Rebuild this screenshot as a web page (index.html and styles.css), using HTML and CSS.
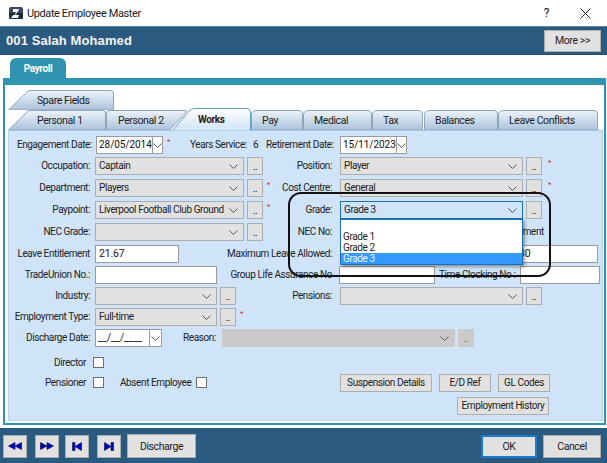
FILE: index.html
```html
<!DOCTYPE html>
<html lang="en">
<head>
<meta charset="utf-8">
<title>Update Employee Master</title>
<link rel="stylesheet" href="styles.css">
</head>
<body>
<svg class="defs" width="0" height="0" aria-hidden="true">
  <symbol id="chev" viewBox="0 0 9 5"><path d="M.5.5 4.5 4.5 8.5.5" fill="none" stroke="#555" stroke-width="1"/></symbol>
</svg>
<div class="window">
  <div class="title">
    <svg class="appicon" width="16" height="16" viewBox="0 0 16 16"><rect x="1" y="2" width="14" height="12" rx="2" fill="#3a4a5c"/><rect x="1" y="8" width="14" height="6" rx="1" fill="#1f2b38"/><path d="M5 4h6l-1 3H9l-1 3h3l-1 3H3l2-3h2l1-3H5z" fill="#f2f2f2"/></svg>
    <span class="title-text">Update Employee Master</span>
    <span class="help">?</span>
    <svg class="close" width="11" height="11" viewBox="0 0 11 11"><path d="M.5.5l10 10M10.500.5l-10 10" stroke="#222" stroke-width="1" fill="none"/></svg>
  </div>
  <div class="header">
    <span class="emp">001 Salah Mohamed</span>
    <div class="btn more">More &gt;&gt;</div>
  </div>
  <div class="outer-tabs"><div class="payroll">Payroll</div></div>
  <div class="page">
    <div class="tabs">
      <div class="tabrow">
        <div class="tab t-spare">
          <svg class="tabshape" width="106" height="20" viewBox="0 0 106 20"><path d="M.5 20 20 1Q21 .5 23 .5H103Q105.500 .5 105.500 3V20Z" fill="url(#g)" stroke="#8fa5b9"/><defs><linearGradient id="g" x1="0" y1="0" x2="0" y2="1"><stop offset="0" stop-color="#eef3f9"/><stop offset="1" stop-color="#a9c3dc"/></linearGradient><linearGradient id="w" x1="0" y1="0" x2="0" y2="1"><stop offset="0" stop-color="#fff"/><stop offset="1" stop-color="#cfe4f8"/></linearGradient></defs></svg>
          <span>Spare Fields</span>
        </div>
      </div>
      <div class="tabrow">
        <div class="tab t-p1">
          <svg class="tabshape" width="98" height="20" viewBox="0 0 98 20"><path d="M.5 20 20 1Q21 .5 23 .5H95Q97.500 .5 97.500 3V20Z" fill="url(#g)" stroke="#8fa5b9"/></svg>
          <span>Personal 1</span>
        </div>
        <div class="tab t-p2">
          <svg class="tabshape" width="82" height="20" viewBox="0 0 82 20"><path d="M.5 20V4Q.5 .5 4 .5H79Q81 .5 80 2L64 20Z" fill="url(#g)" stroke="#8fa5b9"/></svg>
          <span>Personal 2</span>
        </div>
        <div class="tab t-works">
          <svg class="tabshape" width="79" height="23" viewBox="0 0 79 23"><path d="M.5 22.500 17 3Q19 .5 23 .5H74Q78.500 .5 78.500 5V22.500" fill="url(#w)" stroke="#5f9fbf"/></svg>
          <span>Works</span>
        </div>
        <div class="tab t-pay">
          <svg class="tabshape" width="52" height="20" viewBox="0 0 52 20"><path d="M.5 20V5Q.5 .5 6 .5H48Q51.500 .5 51.500 4V20Z" fill="url(#g)" stroke="#8fa5b9"/></svg>
          <span>Pay</span>
        </div>
        <div class="tab t-med">
          <svg class="tabshape" width="69" height="20" viewBox="0 0 69 20"><path d="M.5 20V5Q.5 .5 6 .5H65Q68.500 .5 68.500 4V20Z" fill="url(#g)" stroke="#8fa5b9"/></svg>
          <span>Medical</span>
        </div>
        <div class="tab t-tax">
          <svg class="tabshape" width="51" height="20" viewBox="0 0 51 20"><path d="M.5 20V5Q.5 .5 6 .5H47Q50.500 .5 50.500 4V20Z" fill="url(#g)" stroke="#8fa5b9"/></svg>
          <span>Tax</span>
        </div>
        <div class="tab t-bal">
          <svg class="tabshape" width="74" height="20" viewBox="0 0 74 20"><path d="M.5 20V5Q.5 .5 6 .5H70Q73.500 .5 73.500 4V20Z" fill="url(#g)" stroke="#8fa5b9"/></svg>
          <span>Balances</span>
        </div>
        <div class="tab t-leave">
          <svg class="tabshape" width="100" height="20" viewBox="0 0 100 20"><path d="M.5 20V5Q.5 .5 6 .5H96Q99.500 .5 99.500 4V20Z" fill="url(#g)" stroke="#8fa5b9"/></svg>
          <span>Leave Conflicts</span>
        </div>
      </div>
    </div>
    <div class="panel">
      <div class="row h21">
        <span class="lbl lbl-e">Engagement Date:</span>
        <div class="date w67"><span class="date-val">28/05/2014</span><span class="date-btn"><svg width="9" height="5"><use href="#chev"/></svg></span></div>
        <span class="star">*</span>
        <span class="years-l">Years Service:</span>
        <span class="years-v">6</span>
        <span class="ret-l">Retirement Date:</span>
        <div class="date w67"><span class="date-val">15/11/2023</span><span class="date-btn"><svg width="9" height="5"><use href="#chev"/></svg></span></div>
      </div>
      <div class="row h22">
        <div class="left"><span class="lbl">Occupation:</span>
          <div class="sel w148"><span>Captain</span><svg width="9" height="5"><use href="#chev"/></svg></div><div class="dots">..</div></div>
        <div class="right"><span class="rlbl">Position:</span>
          <div class="sel w183"><span>Player</span><svg width="9" height="5"><use href="#chev"/></svg></div><div class="dots">..</div><span class="star">*</span></div>
      </div>
      <div class="row h22">
        <div class="left"><span class="lbl">Department:</span>
          <div class="sel w148"><span>Players</span><svg width="9" height="5"><use href="#chev"/></svg></div><div class="dots">..</div><span class="star">*</span></div>
        <div class="right"><span class="rlbl">Cost Centre:</span>
          <div class="sel w183"><span>General</span><svg width="9" height="5"><use href="#chev"/></svg></div><div class="dots">..</div><span class="star">*</span></div>
      </div>
      <div class="row h22">
        <div class="left"><span class="lbl">Paypoint:</span>
          <div class="sel w148"><span>Liverpool Football Club Ground</span><svg width="9" height="5"><use href="#chev"/></svg></div><div class="dots">..</div><span class="star">*</span></div>
        <div class="right"><span class="rlbl">Grade:</span>
          <div class="sel w183 focus"><span>Grade 3</span><svg width="9" height="5"><use href="#chev"/></svg>
            <div class="dropdown">
              <div class="opt"></div>
              <div class="opt">Grade 1</div>
              <div class="opt">Grade 2</div>
              <div class="opt on">Grade 3</div>
            </div>
          </div><div class="dots">..</div></div>
      </div>
      <div class="row h22">
        <div class="left"><span class="lbl">NEC Grade:</span>
          <div class="sel w148"><span></span><svg width="9" height="5"><use href="#chev"/></svg></div><div class="dots">..</div></div>
        <div class="right"><span class="rlbl">NEC No:</span><span class="ret-flag">Retirement</span></div>
      </div>
      <div class="row h21">
        <div class="left"><span class="lbl">Leave Entitlement</span><div class="input w84">21.67</div></div>
        <div class="right"><span class="rlbl">Maximum Leave Allowed:</span><div class="input w84 max">30</div></div>
      </div>
      <div class="row h21">
        <div class="left"><span class="lbl">TradeUnion No.:</span><div class="input w122"></div></div>
        <div class="right"><span class="rlbl">Group Life Assurance No</span><div class="input w96 gl"></div><span class="tc">Time Clocking No :</span><div class="input w80"></div></div>
      </div>
      <div class="row h21">
        <div class="left"><span class="lbl">Industry:</span>
          <div class="sel w122"><span></span><svg width="9" height="5"><use href="#chev"/></svg></div><div class="dots">..</div></div>
        <div class="right"><span class="rlbl">Pensions:</span>
          <div class="sel w183"><span></span><svg width="9" height="5"><use href="#chev"/></svg></div><div class="dots">..</div></div>
      </div>
      <div class="row h21">
        <div class="left"><span class="lbl">Employment Type:</span>
          <div class="sel w122"><span>Full-time</span><svg width="9" height="5"><use href="#chev"/></svg></div><div class="dots">..</div><span class="star">*</span></div>
      </div>
      <div class="row h26">
        <span class="lbl">Discharge Date:</span>
        <div class="date w67"><span class="date-val">__/__/____</span><span class="date-btn"><svg width="9" height="5"><use href="#chev"/></svg></span></div>
        <span class="reason">Reason:</span>
        <div class="sel w233 off"><span></span><svg width="9" height="5"><use href="#chev"/></svg></div><div class="dots off">..</div>
      </div>
      <div class="row h19">
        <span class="clbl">Director</span><span class="check"></span>
      </div>
      <div class="row h22">
        <span class="clbl">Pensioner</span><span class="check"></span>
        <span class="absent">Absent Employee</span><span class="check"></span>
        <div class="actions">
          <div class="btn b-susp">Suspension Details</div>
          <div class="btn b-ed">E/D Ref</div>
          <div class="btn b-gl">GL Codes</div>
        </div>
      </div>
      <div class="row h20 hist"><div class="btn b-hist">Employment History</div></div>
    </div>
  </div>
  <div class="footer">
    <div class="btn nav n1"><svg width="14" height="8" viewBox="0 0 14 8"><path d="M.5 4 7 .5V7.500ZM7 4 13.500 .5V7.500Z" fill="#0000c8" stroke="#101848" stroke-width=".7"/></svg></div>
    <div class="btn nav n2"><svg width="14" height="8" viewBox="0 0 14 8"><path d="M7 4 .5 .5V7.500ZM13.500 4 7 .5V7.500Z" fill="#0000c8" stroke="#101848" stroke-width=".7"/></svg></div>
    <div class="btn nav n3"><svg width="10" height="9" viewBox="0 0 10 9"><path d="M.5 .5H3V8.500H.5ZM3 4.500 9.500 .5V8.500Z" fill="#0000c8" stroke="#101848" stroke-width=".7"/></svg></div>
    <div class="btn nav n4"><svg width="10" height="9" viewBox="0 0 10 9"><path d="M9.500 .5H7V8.500H9.500ZM7 4.500 .5 .5V8.500Z" fill="#0000c8" stroke="#101848" stroke-width=".7"/></svg></div>
    <div class="btn discharge">Discharge</div>
    <div class="btn ok">OK</div>
    <div class="btn cancel">Cancel</div>
  </div>
  <div class="annotation"></div>
</div>
</body>
</html>
```
FILE: styles.css
```css
* { box-sizing: border-box; }
html, body { margin: 0; padding: 0; }
body { width: 607px; height: 463px; overflow: hidden; background: #fff; font: 10px Roboto, "Liberation Sans", Arial, sans-serif; letter-spacing: -.4px; color: #222; }
.defs { position: absolute; }
.window { position: relative; width: 607px; height: 463px; display: flex; flex-direction: column; }

.title { height: 26px; flex: none; display: flex; align-items: center; padding-left: 8px; background: #fff; }
.appicon { flex: none; }
.title-text { margin-left: 3px; font-size: 11px; color: #1a1a1a; }
.help { margin-left: auto; font-size: 12px; margin-right: 31px; color: #222; }
.close { margin-right: 16px; }

.header { height: 29px; flex: none; display: flex; align-items: center; background: #2a5a80; border-top: 1px solid #5b87a6; border-bottom: 1px solid #1f4a6b; padding: 0 6px; }
.emp { font: bold 13px "Liberation Sans", Arial, sans-serif; color: #f4f4f4; letter-spacing: .1px; }
.btn { display: flex; align-items: center; justify-content: center; background: #e1e1e1; border: 1px solid #adadad; color: #222; white-space: nowrap; }
.more { margin-left: auto; width: 57px; height: 22px; font-size: 10.500px; }

.outer-tabs { height: 23px; flex: none; padding: 3px 0 0 10px; background: #fff; display: flex; align-items: flex-end; }
.payroll { width: 56px; height: 20px; background: #2f93b0; border-radius: 6px 6px 0 0; color: #fff; font-weight: bold; display: flex; align-items: center; justify-content: center; }

.page { flex: 1; min-height: 0; margin: 0 1px 3px 3px; border: solid #2f93b0; border-width: 7px 2px 2px 2px; background: #fff; padding: 5px 1px 2px 3px; display: flex; flex-direction: column; }

.tabs { height: 40px; flex: none; position: relative; }
.tabrow { display: flex; height: 20px; align-items: flex-end; }
.tab { position: relative; height: 20px; flex: none; display: flex; align-items: center; padding-left: 11px; color: #222; font-size: 10.500px; letter-spacing: -.4px; }
.tab span { position: relative; }
.tabshape { position: absolute; left: 0; bottom: 0; }
.t-spare { width: 106px; padding-left: 29px; }
.t-p1 { width: 98px; padding-left: 29px; }
.t-p2 { width: 82px; margin-right: -16px; padding-left: 12px; }
.t-works { width: 79px; height: 23px; font-weight: bold; z-index: 1; margin-bottom: -1px; padding-left: 26px; font-size: 10px; }
.t-pay { width: 52px; }
.t-med { width: 69px; }
.t-tax { width: 51px; }
.t-bal { width: 74px; margin-left: 1px; }
.t-leave { width: 100px; }

.panel { flex: 1; min-height: 0; background: #cfe4f8; border: 1px solid #b9d4ea; border-top: 1px solid #a9c6e0; padding-top: 5px; }
.row { display: flex; align-items: flex-start; line-height: 18px; }
.h19 { height: 19px; line-height: 16px; } .h20 { height: 20px; margin-top: 1px; } .h21 { height: 21px; } .h22 { height: 22px; } .h26 { height: 26px; }
.left { display: flex; align-items: flex-start; width: 261px; flex: none; }
.right { display: flex; align-items: flex-start; flex: none; }
.lbl { width: 81px; margin-right: 5px; flex: none; display: flex; justify-content: flex-end; white-space: nowrap; }
.lbl-e { width: 83px; margin-right: 4px; }
.rlbl { width: 62px; margin-right: 8px; flex: none; display: flex; justify-content: flex-end; white-space: nowrap; }
.star { color: #e0202a; font-size: 8px; line-height: 10px; width: 5px; margin-left: 4px; flex: none; padding-top: 1px; }
.right .star { margin-left: 6px; }

.sel { position: relative; height: 18px; flex: none; display: flex; align-items: center; justify-content: space-between; padding: 0 3px; background: #e1e1e1; border: 1px solid #adadad; }
.sel span { white-space: nowrap; }
.sel svg { flex: none; margin-right: 2px; }
.sel.focus { background: #cfe4f8; border-color: #1b6fb5; z-index: 2; }
.sel.off { background: #cacaca; border-color: #cacaca; }
.dots { width: 16px; height: 18px; margin-left: 3px; flex: none; background: #e1e1e1; border: 1px solid #adadad; display: flex; align-items: flex-end; justify-content: center; font-size: 10px; line-height: 14px; }
.dots.off { background: #cacaca; border-color: #cacaca; color: #666; }
.w148 { width: 149px; } .w183 { width: 183px; } .w122 { width: 122px; } .w84 { width: 84px; } .w96 { width: 96px; } .w80 { width: 80px; } .w233 { width: 233px; } .w67 { width: 67px; }

.input { height: 18px; flex: none; background: #fff; border: 1px solid #9a9a9a; padding: 0 2px 0 3px; font-size: 10.500px; line-height: 16px; letter-spacing: -.2px; }
.max { margin-left: 175px; width: 83px; }
.gl { margin-left: -1px; }
.tc { width: 85px; padding-left: 4px; white-space: nowrap; flex: none; }

.date { height: 18px; display: flex; flex: none; background: #fff; border: 1px solid #9a9a9a; }
.date-val { flex: 1; padding-left: 2px; font-size: 10px; line-height: 16px; color: #111; white-space: nowrap; letter-spacing: -.05px; }
.date-btn { width: 12px; border-left: 1px solid #9a9a9a; display: flex; align-items: center; justify-content: center; background: #fff; }

.years-l { margin-left: 18px; width: 60px; flex: none; white-space: nowrap; }
.years-v { margin-left: 3px; width: 7px; flex: none; }
.ret-l { margin-left: 6px; width: 71px; margin-right: 3px; flex: none; white-space: nowrap; }
.ret-flag { margin-left: 138px; white-space: nowrap; width: 66px; text-align: right; flex: none; }

.reason { margin-left: 21px; width: 39px; flex: none; }
.clbl { width: 77px; text-align: right; flex: none; margin-right: 7px; }
.check { width: 11px; height: 11px; flex: none; background: #fff; border: 1px solid #6f6f6f; margin-top: 3px; }
.h19 .check { margin-top: 2px; }
.absent { margin-left: 16px; width: 69px; margin-right: 7px; white-space: nowrap; flex: none; }

.actions { margin-left: 133px; display: flex; gap: 7px; align-items: flex-start; }
.b-susp { width: 92px; height: 18px; }
.b-ed { width: 52px; height: 18px; }
.b-gl { width: 52px; height: 18px; }
.hist { justify-content: flex-end; padding-right: 53px; }
.b-hist { width: 92px; height: 18px; }

.dropdown { position: absolute; left: -1px; top: 17px; width: 183px; background: #fff; border: 1px solid #1b6fb5; box-shadow: 2px 2px 3px rgba(0,0,0,.35); z-index: 3; }
.opt { height: 11px; line-height: 11px; padding-left: 2px; color: #222; }
.opt.on { background: #3399ff; color: #eaf4ff; }

.footer { height: 35px; flex: none; display: flex; align-items: center; background: #2a5a80; padding: 1px 6px 0 3px; }
.nav { height: 23px; width: 24px; }
.n2 { margin-left: 8px; }
.n3 { margin-left: 6px; }
.n4 { margin-left: 8px; }
.discharge { margin-left: 6px; width: 69px; height: 24px; font-size: 10.500px; }
.ok { margin-left: auto; width: 56px; height: 23px; border: 2px solid #1a7ad0; font-size: 10.500px; }
.cancel { margin-left: 6px; width: 58px; height: 23px; font-size: 10.500px; }

.annotation { position: absolute; left: 288px; top: 192px; width: 263px; height: 85px; border: 2px solid #111; border-radius: 13px; pointer-events: none; z-index: 5; }
```
